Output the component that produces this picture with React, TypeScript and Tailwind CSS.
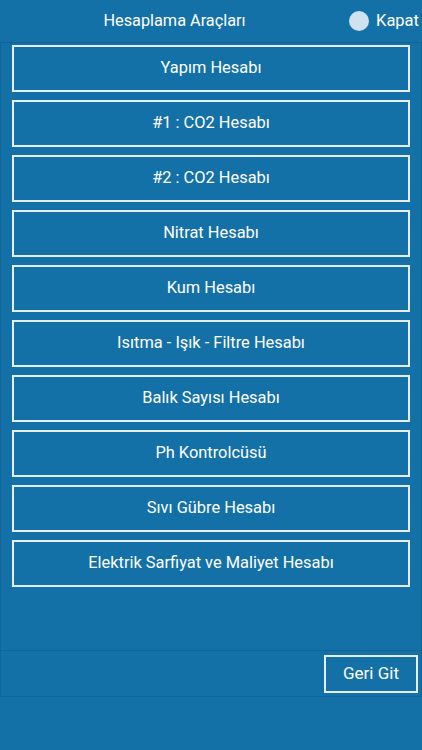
const items = [
  'Yapım Hesabı',
  '#1 : CO2 Hesabı',
  '#2 : CO2 Hesabı',
  'Nitrat Hesabı',
  'Kum Hesabı',
  'Isıtma - Işık - Filtre Hesabı',
  'Balık Sayısı Hesabı',
  'Ph Kontrolcüsü',
  'Sıvı Gübre Hesabı',
  'Elektrik Sarfiyat ve Maliyet Hesabı',
];

export default function App() {
  return (
    <div className="w-[422px] h-[750px] bg-[#1371a8] text-white font-['Roboto',sans-serif] overflow-hidden">
      {/* header */}
      <div className="h-[42px] flex items-center">
        <div className="flex-1 text-center text-[16.3px]">Hesaplama Araçları</div>
        <div className="flex items-center gap-[7px] pr-[3px]">
          <div className="w-[20px] h-[20px] rounded-full bg-[#d0e1ef]" />
          <span className="text-[16.5px]">Kapat</span>
        </div>
      </div>

      {/* list panel */}
      <div className="h-[609px] border border-[#0f6598] px-[11px] pt-[2px] flex flex-col gap-[8px]">
        {items.map((label) => (
          <button
            key={label}
            className="h-[47px] w-full border-2 border-[#e6eef5] flex items-center justify-center text-[16.4px]"
          >
            {label}
          </button>
        ))}
      </div>

      {/* footer */}
      <div className="h-[46px] border border-[#0f6598] border-t-0 flex items-center justify-end pr-[3px]">
        <button className="w-[94px] h-[38px] border-2 border-[#e6eef5] text-[17px] flex items-center justify-center">
          Geri Git
        </button>
      </div>
    </div>
  );
}
